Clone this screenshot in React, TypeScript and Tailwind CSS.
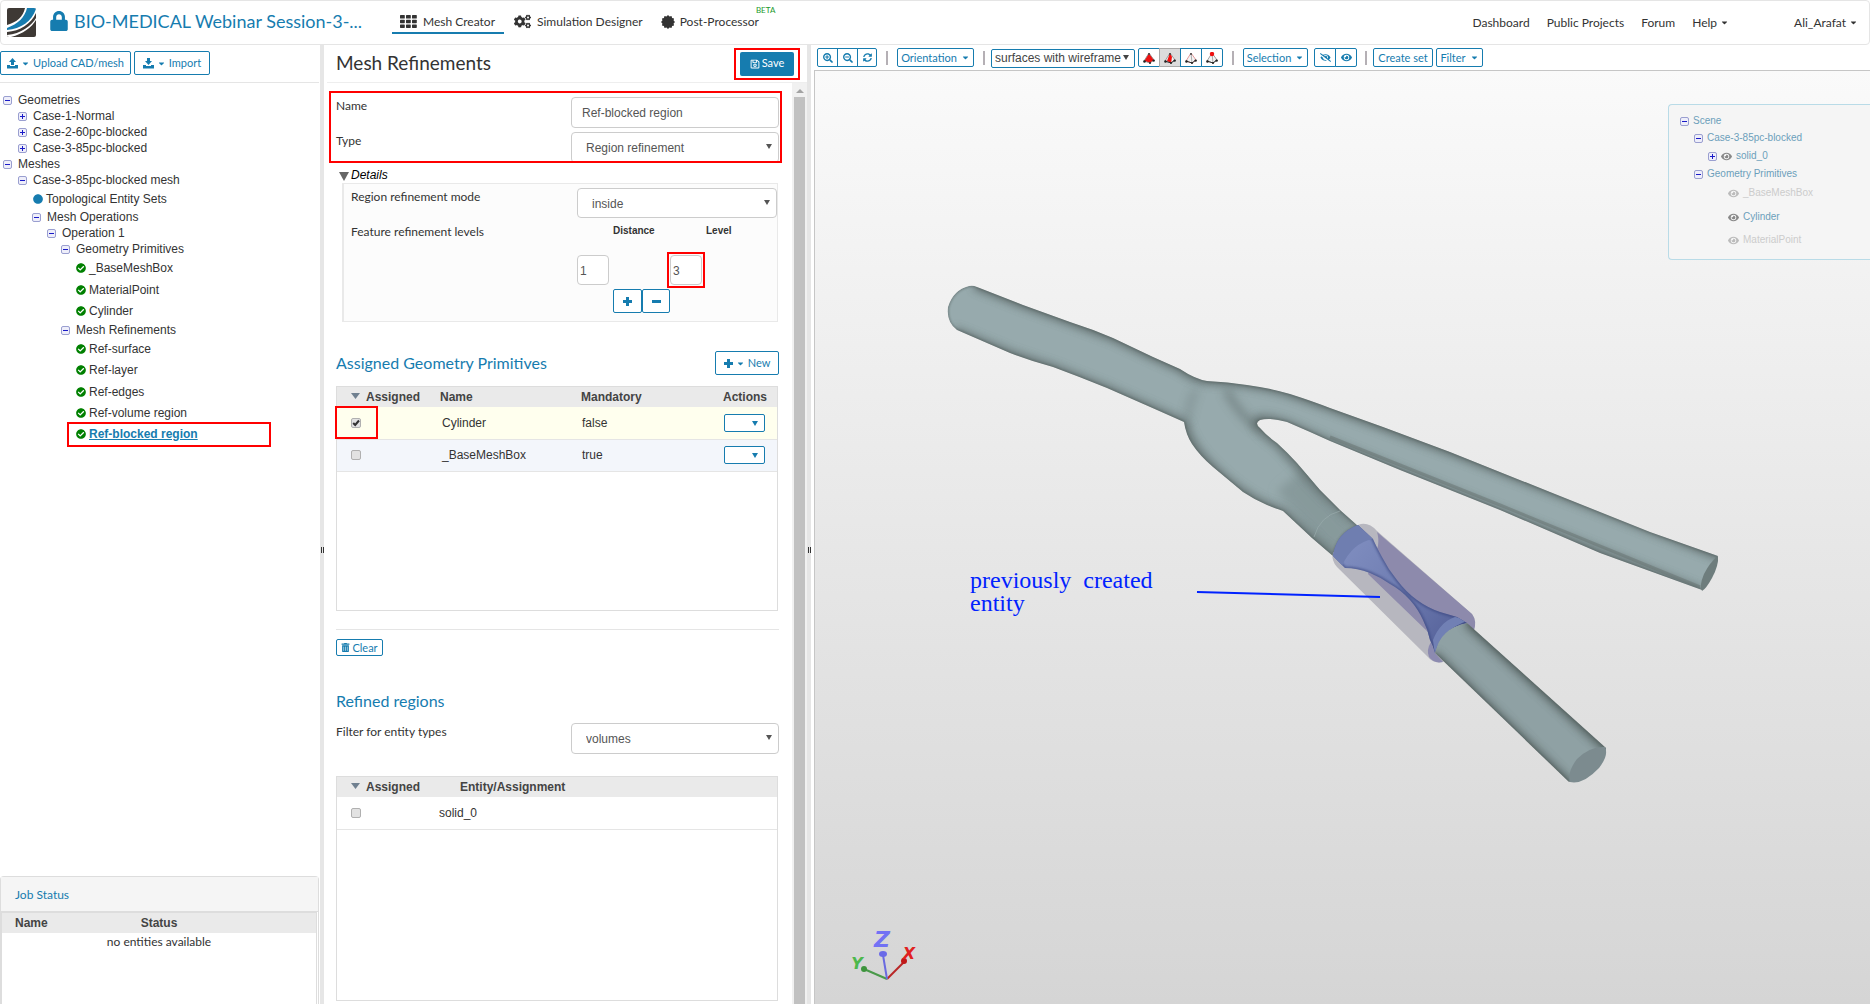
import React from 'react';
import { FaCaretDown, FaCheckCircle, FaCircle, FaCogs, FaEye, FaEyeSlash, FaLock, FaRegSave, FaSearchMinus, FaSearchPlus, FaSyncAlt, FaTrashAlt } from 'react-icons/fa';

const LATO = "font-['Lato','Liberation_Sans',sans-serif]";
const ARIAL = "font-['Liberation_Sans',Arial,sans-serif]";

interface TreeItem {
    label: string;
    kind: 'open' | 'closed' | 'set' | 'done';
    indent: string;
    height: string;
    active?: boolean;
}

const TREE: TreeItem[] = [
    { label: 'Geometries', kind: 'open', indent: 'pl-[3px]', height: 'h-4' },
    { label: 'Case-1-Normal', kind: 'closed', indent: 'pl-[18px]', height: 'h-4' },
    { label: 'Case-2-60pc-blocked', kind: 'closed', indent: 'pl-[18px]', height: 'h-4' },
    { label: 'Case-3-85pc-blocked', kind: 'closed', indent: 'pl-[18px]', height: 'h-4' },
    { label: 'Meshes', kind: 'open', indent: 'pl-[3px]', height: 'h-4' },
    { label: 'Case-3-85pc-blocked mesh', kind: 'open', indent: 'pl-[18px]', height: 'h-4' },
    { label: 'Topological Entity Sets', kind: 'set', indent: 'pl-[33px]', height: 'h-[21px]' },
    { label: 'Mesh Operations', kind: 'open', indent: 'pl-[32px]', height: 'h-4' },
    { label: 'Operation 1', kind: 'open', indent: 'pl-[47px]', height: 'h-4' },
    { label: 'Geometry Primitives', kind: 'open', indent: 'pl-[61px]', height: 'h-4' },
    { label: '_BaseMeshBox', kind: 'done', indent: 'pl-[76px]', height: 'h-[22px]' },
    { label: 'MaterialPoint', kind: 'done', indent: 'pl-[76px]', height: 'h-[21px]' },
    { label: 'Cylinder', kind: 'done', indent: 'pl-[76px]', height: 'h-[22px]' },
    { label: 'Mesh Refinements', kind: 'open', indent: 'pl-[61px]', height: 'h-4' },
    { label: 'Ref-surface', kind: 'done', indent: 'pl-[76px]', height: 'h-[21px]' },
    { label: 'Ref-layer', kind: 'done', indent: 'pl-[76px]', height: 'h-[22px]' },
    { label: 'Ref-edges', kind: 'done', indent: 'pl-[76px]', height: 'h-[21px]' },
    { label: 'Ref-volume region', kind: 'done', indent: 'pl-[76px]', height: 'h-[21px]' },
    { label: 'Ref-blocked region', kind: 'done', indent: 'pl-[76px]', height: 'h-[22px]', active: true },
];

const Toggle: React.FC<{ open: boolean }> = ({ open }) => (
    <svg viewBox="0 0 9 9" className="w-[9px] h-[9px] shrink-0">
        <rect x="0.5" y="0.5" width="8" height="8" rx="1.5" fill="#eeeefa" stroke="#9a9fd0" />
        <path d={open ? 'M2 4.5H7' : 'M2 4.5H7M4.5 2V7'} stroke="#1a1ac8" strokeWidth="1" />
    </svg>
);

const RedBox: React.FC<{ className: string }> = ({ className }) => (
    <span className={`absolute border-2 border-[#f00] pointer-events-none z-10 ${className}`} />
);

const TrayIcon: React.FC<{ up?: boolean }> = ({ up }) => (
    <svg viewBox="0 0 11 11" className="w-[11px] h-[11px] shrink-0" fill="currentColor">
        <path d={up ? 'M5.5 0L9 4H7V7H4V4H2Z' : 'M4 0H7V3H9L5.5 7L2 3H4Z'} />
        <path d="M0 7H3V8H8V7H11V10.5H0Z" />
    </svg>
);

const PlusIcon = () => (
    <svg viewBox="0 0 9 9" className="w-[9px] h-[9px] shrink-0" fill="currentColor"><path d="M3 0H6V3H9V6H6V9H3V6H0V3H3Z" /></svg>
);

const MinusIcon = () => (
    <svg viewBox="0 0 9 9" className="w-[9px] h-[9px] shrink-0" fill="currentColor"><path d="M0 3H9V6H0Z" /></svg>
);

const StarBurst = () => {
    const points = Array.from({ length: 24 }, (_, i) => {
        const r = i % 2 ? 5.8 : 7;
        const a = (i * Math.PI) / 12;
        return `${7 + r * Math.cos(a)},${7 + r * Math.sin(a)}`;
    }).join(' ');
    return (
        <svg viewBox="0 0 14 14" className="w-[14px] h-[14px]" fill="currentColor">
            <polygon points={points} />
        </svg>
    );
};

const GridIcon = () => (
    <svg viewBox="0 0 17 13" className="w-[17px] h-[13px]" fill="currentColor">
        {[0, 6, 12].map((x) => [0, 4.7, 9.4].map((y) => <rect key={`${x}-${y}`} x={x} y={y} width="4.8" height="3.5" rx="0.6" />))}
    </svg>
);

const Logo = () => (
    <svg viewBox="0 0 29 29" className="w-[29px] h-[29px] shrink-0">
        <defs>
            <clipPath id="logo-clip"><rect width="29" height="29" rx="2" /></clipPath>
        </defs>
        <g clipPath="url(#logo-clip)">
            <rect width="29" height="29" fill="#3e3935" />
            <path d="M0 17C10 14 16 9 18 0H29V5C24 16 13 23 0 24Z" fill="#fff" />
            <path d="M0 20C11 16 18 9 20 0H29V1C25 13 14 21 0 22Z" fill="#167caf" />
            <path d="M0 27C14 26 25 17 29 10V12C25 19 16 26 4 29H0Z" fill="#fff" />
        </g>
    </svg>
);

// Tetrahedron glyphs for the surface / edge / vertex pick modes
const Tetra: React.FC<{ mode: 'volume' | 'face' | 'edge' | 'node' }> = ({ mode }) => (
    <svg viewBox="0 0 12 12" className="w-3 h-3">
        <path d="M6 1L1 9L7 11L11 8Z" fill={mode === 'volume' ? '#f01010' : '#f4f4f4'} stroke={mode === 'edge' ? '#e08080' : '#888'} strokeWidth="0.8" />
        {mode !== 'volume' && <path d="M6 1L7 11" stroke="#999" strokeWidth="0.8" />}
        {mode === 'face' && <path d="M6 1L3 9L7 11L8 5Z" fill="#f01010" />}
        {mode !== 'volume' && <path d="M1 9L7 11L11 8" stroke="#333" strokeWidth="1" fill="none" />}
        <circle cx="1.5" cy="9.5" r="1.3" fill="#222" />
        <circle cx="7" cy="11" r="1" fill="#222" />
        <circle cx="10.7" cy="8.6" r="1.2" fill="#222" />
        <circle cx="6" cy="2" r={mode === 'node' ? 2.2 : 1} fill={mode === 'node' ? '#f01010' : '#444'} />
    </svg>
);

const Check: React.FC<{ label: string; checked?: boolean }> = ({ label, checked }) => (
    <span className="relative block w-[10px] h-[10px]">
        <input type="checkbox" aria-label={label} defaultChecked={checked} className="peer appearance-none block w-[10px] h-[10px] border border-[#b0b0b0] rounded-[2px] bg-[#e2e2e2]" />
        <svg viewBox="0 0 10 10" className="absolute inset-0 w-[10px] h-[10px] hidden peer-checked:block pointer-events-none">
            <path d="M2.2 5L4.2 7L8 2.5" fill="none" stroke="#333" strokeWidth="2" />
        </svg>
    </span>
);

const Arrow: React.FC<{ className: string }> = ({ className }) => (
    <svg viewBox="0 0 6 5" className={`absolute w-[6px] h-[5px] pointer-events-none ${className}`} fill="currentColor">
        <path d="M0 0H6L3 5Z" />
    </svg>
);

const SelectBox: React.FC<{ id: string; value: string; className: string }> = ({ id, value, className }) => (
    <span className={`relative block text-[#555] shrink-0 ${className}`}>
        <select id={id} className={`appearance-none w-full h-full border border-[#ccc] rounded bg-white pl-[14px] pt-px text-xs ${ARIAL}`}>
            <option>{value}</option>
        </select>
        <Arrow className="right-[7px] top-3" />
    </span>
);

const TOOL = 'border border-[#167caf] rounded-[2px] bg-white text-[#167caf] flex items-center justify-center text-[11px] leading-4 whitespace-nowrap';
const GROUPED = 'border border-[#167caf] bg-white text-[#167caf] flex items-center justify-center h-full -ml-px';

const Separator = () => <span className="w-[2px] h-[14px] bg-[#b5b0b5]" />;

const Header = () => (
    <header className="h-[45px] shrink-0 border border-[#e5e5e5] rounded flex items-center pl-[6px] pr-[11px] text-[#333]">
        <Logo />
        <FaLock className="text-[#167caf] ml-[14px] mb-1 w-[18px] h-5" />
        <a href="#project" className="ml-[6px] text-lg leading-6 text-[#167caf] w-[318px] pb-1 whitespace-nowrap">BIO-MEDICAL Webinar Session-3-...</a>
        <nav className="flex text-xs leading-4 h-[22px]">
            <a href="#mesh" className="flex items-center gap-[6px] pl-2 pr-[9px] border-b-2 border-[#167caf]"><GridIcon />Mesh Creator</a>
            <a href="#simulation" className="flex items-center gap-[6px] ml-[10px] pb-[2px]"><FaCogs size={17} />Simulation Designer</a>
            <a href="#post" className="relative flex items-center gap-[5px] ml-[18px] pb-[2px]">
                <StarBurst />Post-Processor
                <span className="absolute left-full -ml-[3px] -top-[7px] text-[8px] leading-[10px] text-[#1d9a2c]">BETA</span>
            </a>
        </nav>
        <nav className="ml-auto flex items-center gap-[17px] text-xs leading-4">
            <a href="#dashboard">Dashboard</a>
            <a href="#projects">Public Projects</a>
            <a href="#forum">Forum</a>
            <a href="#help" className="flex items-center gap-[3px]">Help <FaCaretDown size={9} /></a>
            <a href="#user" className="flex items-center gap-[3px] ml-12">Ali_Arafat <FaCaretDown size={9} /></a>
        </nav>
    </header>
);

const TreeRow: React.FC<{ item: TreeItem }> = ({ item }) => (
    <li className={`relative flex items-center ${item.indent} ${item.height}`}>
        {item.kind === 'open' && <Toggle open />}
        {item.kind === 'closed' && <Toggle open={false} />}
        {item.kind === 'set' && <FaCircle size={10} className="text-[#167caf]" />}
        {item.kind === 'done' && <FaCheckCircle size={10} className="text-[#008000]" />}
        {item.active ? (
            <a href="#active" className="font-bold underline text-[#167caf] ml-[3px]">{item.label}</a>
        ) : (
            <span className={item.kind === 'open' || item.kind === 'closed' ? 'ml-[6px]' : 'ml-[3px]'}>{item.label}</span>
        )}
        {item.active && <RedBox className="left-[67px] right-[49px] -top-px h-[25px]" />}
    </li>
);

const LeftPanel = () => (
    <aside className="w-80 shrink-0 flex flex-col">
        <div className="flex gap-[3px] pt-[6px] pb-[7px] border-b border-[#e5e5e5] mr-px">
            <button className={`${TOOL} h-6 w-[131px] gap-[3px]`}><TrayIcon up /><FaCaretDown size={9} />Upload CAD/mesh</button>
            <button className={`${TOOL} h-6 w-[76px] gap-[3px]`}><TrayIcon /><FaCaretDown size={9} />Import</button>
        </div>
        <ul className={`flex-1 pt-[9px] text-xs leading-4 text-[#333] ${ARIAL}`}>
            {TREE.map((item) => <TreeRow key={item.label} item={item} />)}
        </ul>
        <section className="h-32 shrink-0 border border-b-0 border-[#ddd] rounded-t mr-px">
            <h2 className="h-[35px] bg-[#f5f5f5] border-b border-[#ddd] pl-[14px] pt-[2px] flex items-center text-xs text-[#167caf]">Job Status</h2>
            <div className="h-[92px] border border-b-0 border-[#ddd] mr-px">
                <table className="w-full table-fixed text-xs leading-4 text-[#333]">
                    <thead className={`bg-[#eaeaea] text-[#444] ${ARIAL}`}>
                        <tr className="h-5">
                            <th className="w-[90px] text-left pl-[13px]">Name</th>
                            <th>Status</th>
                            <th className="w-[90px]" />
                        </tr>
                    </thead>
                    <tbody>
                        <tr className="h-[18px]"><td colSpan={3} className="text-center">no entities available</td></tr>
                    </tbody>
                </table>
            </div>
        </section>
    </aside>
);

const Splitter = () => (
    <div className="w-1 shrink-0 bg-[#e6e6e6] flex items-center justify-end">
        <span className="w-[3px] h-[6px] border-x border-[#333] bg-[#e6e6e6] mb-[-50px]" />
    </div>
);

const SortHead: React.FC = () => (
    <span className="flex items-center gap-[6px] pl-[14px]">
        <svg viewBox="0 0 9 6" className="w-[9px] h-[6px] mb-[2px]" fill="#708090"><path d="M0 0H9L4.5 6Z" /></svg>
        Assigned
    </span>
);

const PRIMITIVES = [
    { name: 'Cylinder', mandatory: 'false', checked: true, row: 'bg-[#ffffee]' },
    { name: '_BaseMeshBox', mandatory: 'true', checked: false, row: 'bg-[#f3f6fb]' },
];

const FormPanel = () => (
    <main className="w-[483px] shrink-0 flex flex-col text-[#333]">
        <div className="h-[38px] shrink-0 border-b border-[#eee] flex items-center justify-between pl-[9px] pr-[13px] ml-[3px]">
            <h1 className="text-[19px] leading-6 pb-[2px]">Mesh Refinements</h1>
            <span className="relative">
                <button className="bg-[#167caf] text-white rounded-[2px] w-[54px] h-6 flex items-center justify-center gap-[2px] text-[11px]"><FaRegSave size={10} />Save</button>
                <RedBox className="-inset-x-[6px] -top-1 -bottom-1" />
            </span>
        </div>
        <div className="flex-1 min-h-0 flex">
            <form className="flex-1 pl-3 pr-[13px] pt-[14px] text-xs leading-4 overflow-hidden">
                <div className="relative">
                    <div className="flex justify-between">
                        <label htmlFor="name" className="pt-px">Name</label>
                        <input id="name" defaultValue="Ref-blocked region" className={`w-[208px] h-[31px] border border-[#ccc] rounded px-[10px] pt-px text-[#555] ${ARIAL}`} />
                    </div>
                    <div className="flex justify-between mt-1">
                        <label htmlFor="type" className="pt-px">Type</label>
                        <SelectBox id="type" value="Region refinement" className="w-[208px] h-[31px]" />
                    </div>
                    <RedBox className="-left-[7px] -right-[3px] -top-[6px] bottom-0" />
                </div>

                <div className={`flex items-center gap-[2px] pl-[3px] mt-1 italic text-black ${ARIAL}`}>
                    <svg viewBox="0 0 10 9" className="w-[10px] h-[9px] mt-[2px]" fill="#666"><path d="M0 0H10L5 9Z" /></svg>
                    Details
                </div>
                <fieldset className="ml-[6px] mr-px h-[139px] border border-l-2 border-[#e9e9e9] bg-[#fcfcfc] pl-[7px] pt-1">
                    <div className="flex justify-between">
                        <label htmlFor="mode" className="pt-px">Region refinement mode</label>
                        <SelectBox id="mode" value="inside" className="w-[200px] h-[30px]" />
                    </div>
                    <div className="flex justify-between mt-[5px]">
                        <span className="pt-px">Feature refinement levels</span>
                        <div className={`w-[200px] ${ARIAL}`}>
                            <div className="flex text-[10px] font-bold pl-9">
                                <label htmlFor="distance" className="w-[93px]">Distance</label>
                                <label htmlFor="level">Level</label>
                            </div>
                            <div className="flex gap-[61px] mt-4">
                                <input id="distance" defaultValue="1" className="w-8 h-[30px] border border-[#ccc] rounded bg-white px-[2px] pt-px text-[#555]" />
                                <span className="relative">
                                    <input id="level" defaultValue="3" className="w-8 h-[30px] border border-[#ccc] rounded bg-white px-[2px] pt-px text-[#555]" />
                                    <RedBox className="-inset-[3px]" />
                                </span>
                            </div>
                            <div className="flex pl-9 mt-1">
                                <button type="button" aria-label="Add level" className={`${TOOL} w-[29px] h-6`}><PlusIcon /></button>
                                <button type="button" aria-label="Remove level" className={`${TOOL} w-7 h-6`}><MinusIcon /></button>
                            </div>
                        </div>
                    </div>
                </fieldset>

                <div className="flex items-center justify-between mt-[29px]">
                    <h2 className="text-base leading-6 text-[#167caf]">Assigned Geometry Primitives</h2>
                    <button type="button" className={`${TOOL} w-16 h-6 gap-[3px]`}><PlusIcon /><FaCaretDown size={9} />New</button>
                </div>
                <div className={`mt-[11px] mr-px h-[225px] border border-[#ddd] relative ${ARIAL}`}>
                    <table className="w-full table-fixed">
                        <thead className="bg-[#eaeaea] text-[#444] text-left">
                            <tr className="h-5">
                                <th className="w-[103px]"><SortHead /></th>
                                <th className="w-[141px]">Name</th>
                                <th>Mandatory</th>
                                <th className="w-[54px]">Actions</th>
                            </tr>
                        </thead>
                        <tbody>
                            {PRIMITIVES.map((p) => (
                                <tr key={p.name} className={`h-8 border-b border-[#e5e5e5] ${p.row}`}>
                                    <td className="pl-[14px] relative">
                                        <Check label={`Assign ${p.name}`} checked={p.checked} />
                                        {p.checked && <RedBox className="-left-[2px] -top-px w-[43px] h-[33px]" />}
                                    </td>
                                    <td className="pl-[2px]">{p.name}</td>
                                    <td className="pl-px">{p.mandatory}</td>
                                    <td className="pl-px">
                                        <span className="relative block w-[41px] h-[18px] text-[#167caf]">
                                            <select aria-label={`Actions for ${p.name}`} className="appearance-none block w-full h-full border border-[#167caf] rounded-[2px] bg-white"><option /></select>
                                            <Arrow className="right-[7px] top-[7px]" />
                                        </span>
                                    </td>
                                </tr>
                            ))}
                        </tbody>
                    </table>
                </div>
                <hr className="mt-[18px] border-[#e5e5e5]" />
                <button type="button" className={`${TOOL} w-[47px] h-[17px] mt-[9px] gap-[2px]`}><FaTrashAlt size={9} />Clear</button>

                <h2 className="text-base leading-6 text-[#167caf] mt-[33px]">Refined regions</h2>
                <div className="flex justify-between mt-[10px]">
                    <label htmlFor="entity" className="pt-px">Filter for entity types</label>
                    <SelectBox id="entity" value="volumes" className="w-[208px] h-[31px]" />
                </div>
                <div className={`mt-[22px] mr-px h-[225px] border border-[#ddd] ${ARIAL}`}>
                    <table className="w-full table-fixed">
                        <thead className="bg-[#eaeaea] text-[#444] text-left">
                            <tr className="h-5">
                                <th className="w-[102px]"><SortHead /></th>
                                <th className="pl-[21px]">Entity/Assignment</th>
                            </tr>
                        </thead>
                        <tbody>
                            <tr className="h-8 border-b border-[#e5e5e5]">
                                <td className="pl-[14px]"><Check label="Assign solid_0" /></td>
                                <td>solid_0</td>
                            </tr>
                        </tbody>
                    </table>
                </div>
            </form>
            <div className="w-[15px] shrink-0 bg-[#f1f1f1] flex flex-col items-center">
                <svg viewBox="0 0 8 4" className="w-2 h-1 mt-[6px] mb-1 shrink-0" fill="#a3a3a3"><path d="M0 4H8L4 0Z" /></svg>
                <span className="flex-1 w-[11px] bg-[#c1c1c1]" />
            </div>
        </div>
    </main>
);

const Toolbar = () => (
    <div className="h-[25px] shrink-0 flex items-center pl-[6px]">
        <div className="flex h-[19px] pl-px">
            <button aria-label="Zoom in" className={`${GROUPED} w-[21px] rounded-l-[2px]`}><FaSearchPlus size={10} /></button>
            <button aria-label="Zoom out" className={`${GROUPED} w-[21px]`}><FaSearchMinus size={10} /></button>
            <button aria-label="Reset view" className={`${GROUPED} w-5 rounded-r-[2px]`}><FaSyncAlt size={9} /></button>
        </div>
        <div className="flex items-center mx-[9px] gap-[9px]">
            <Separator />
            <button className={`${TOOL} h-[19px] w-[77px] gap-1`}>Orientation <FaCaretDown size={9} /></button>
            <Separator />
        </div>
        <span className={`relative block w-[144px] h-[19px] mt-px text-[#444] -ml-[3px] ${ARIAL}`}>
            <select aria-label="Render mode" className="appearance-none block w-full h-full border border-[#167caf] rounded-[2px] bg-white pl-[3px] text-xs"><option>surfaces with wireframe</option></select>
            <Arrow className="right-[6px] top-[6px]" />
        </span>
        <div className="flex h-[19px] ml-1">
            <button aria-label="Pick volumes" className={`${GROUPED} w-[22px] rounded-l-[2px]`}><Tetra mode="volume" /></button>
            <button aria-label="Pick faces" className="border border-[#aaa] bg-[#dcdcdc] flex items-center justify-center h-full -ml-px w-[22px]"><Tetra mode="face" /></button>
            <button aria-label="Pick edges" className={`${GROUPED} w-[22px]`}><Tetra mode="edge" /></button>
            <button aria-label="Pick nodes" className={`${GROUPED} w-[22px] rounded-r-[2px]`}><Tetra mode="node" /></button>
        </div>
        <div className="flex items-center ml-[9px] gap-[9px]">
            <Separator />
            <button className={`${TOOL} h-[19px] w-[65px] gap-1`}>Selection <FaCaretDown size={9} /></button>
        </div>
        <div className="flex h-[19px] ml-[7px]">
            <button aria-label="Hide selection" className={`${GROUPED} w-[22px] rounded-l-[2px]`}><FaEyeSlash size={11} /></button>
            <button aria-label="Show all" className={`${GROUPED} w-[22px] rounded-r-[2px]`}><FaEye size={11} /></button>
        </div>
        <div className="flex items-center ml-2">
            <Separator />
            <button className={`${TOOL} h-[19px] w-[60px] ml-[6px]`}>Create set</button>
            <button className={`${TOOL} h-[19px] w-[47px] ml-[3px] gap-1`}>Filter <FaCaretDown size={9} /></button>
        </div>
    </div>
);

const SCENE = [
    { label: 'Scene', indent: 'pl-[11px]', height: 'h-4', toggle: true, open: true },
    { label: 'Case-3-85pc-blocked', indent: 'pl-[25px]', height: 'h-[18px]', toggle: true, open: true },
    { label: 'solid_0', indent: 'pl-[39px]', height: 'h-[18px]', toggle: true, open: false, eye: true },
    { label: 'Geometry Primitives', indent: 'pl-[25px]', height: 'h-[18px]', toggle: true, open: true },
    { label: '_BaseMeshBox', indent: 'pl-[59px]', height: 'h-5', eye: true, dim: true },
    { label: 'Cylinder', indent: 'pl-[59px]', height: 'h-7', eye: true },
    { label: 'MaterialPoint', indent: 'pl-[59px]', height: 'h-[18px]', eye: true, dim: true },
];

const ScenePanel = () => (
    <div className={`absolute right-0 top-[33px] w-[202px] h-[156px] border border-r-0 border-[#b9dbe7] rounded-l bg-[#f5f5f5] pt-2 text-[10px] leading-4 text-[#6c9fbb] ${ARIAL}`}>
        <ul>
            {SCENE.map((s) => (
                <li key={s.label} className={`flex items-center gap-1 ${s.indent} ${s.height} ${s.dim ? 'text-[#ccc]' : ''}`}>
                    {s.toggle && <Toggle open={s.open} />}
                    {s.eye && <FaEye size={11} className={s.dim ? 'text-[#bbb]' : 'text-[#888]'} />}
                    <span>{s.label}</span>
                </li>
            ))}
        </ul>
    </div>
);

const VESSEL = 'M969 286Q973 285 977 287L1023 305L1070 322Q1092 329 1113 338L1153 357L1180 369Q1195 379 1207 381Q1228 382 1247 385Q1270 388 1290 394Q1312 401 1330 408L1383 427L1450 452L1550 492L1650 532L1718 556L1702 590L1600 553L1500 510L1400 470L1330 441L1310 432L1287 422Q1270 417 1260 420Q1254 423 1260 428Q1268 437 1277 443Q1288 453 1297 463L1320 490L1340 510L1358 526Q1338 533 1333 556L1312 538L1283 511Q1275 508 1267 505Q1255 500 1243 492L1213 467Q1200 456 1192 444Q1186 435 1184 422L1157 410L1107 388Q1080 377 1053 367Q1030 361 1010 353L957 330Q946 322 948 307Q953 290 969 286Z';
const BLOCKAGE = 'M1358 525L1373 539Q1376 546 1382 557Q1388 569 1397 580Q1406 592 1417 600Q1428 608 1440 612L1457 617L1467 623Q1442 628 1435 653Q1433 646 1430 640Q1428 630 1423 620Q1418 609 1410 600Q1401 590 1390 584Q1380 577 1370 573Q1357 568 1345 568L1333 556Q1336 533 1358 525Z';
const OUTLET = 'M1467 623L1606 748Q1606 770 1569 782L1435 653Q1440 628 1467 623Z';

const VesselScene = () => (
    <svg viewBox="815 71 1055 933" className="absolute inset-0 w-full h-full" preserveAspectRatio="xMinYMin slice">
        <defs>
            <filter id="soft" x="-10%" y="-10%" width="120%" height="120%"><feGaussianBlur stdDeviation="4" /></filter>
            {/* wide region so that blurred short strokes are not cut into boxes */}
            <filter id="haze" filterUnits="userSpaceOnUse" x="1150" y="360" width="240" height="220"><feGaussianBlur stdDeviation="5" /></filter>
            <filter id="edge" x="-10%" y="-10%" width="120%" height="120%"><feGaussianBlur stdDeviation="1" /></filter>
            <clipPath id="vessel-clip"><path d={VESSEL} /></clipPath>
            <clipPath id="block-clip"><path d={BLOCKAGE} /></clipPath>
            <clipPath id="outlet-clip"><path d={OUTLET} /></clipPath>
            <linearGradient id="block-fill" gradientUnits="userSpaceOnUse" x1="1345" y1="545" x2="1450" y2="640">
                <stop offset="0" stopColor="#7f8dbf" />
                <stop offset="0.5" stopColor="#6f7db2" />
                <stop offset="1" stopColor="#56629a" />
            </linearGradient>
        </defs>

        <g clipPath="url(#vessel-clip)">
            <path d={VESSEL} fill="#97aaad" />
            <path d="M1290 480L1345 545" stroke="#879a9b" strokeWidth="34" fill="none" filter="url(#haze)" />
            <g fill="none" stroke="#55615f">
                <path d="M975 284L1023 303L1070 320L1113 336L1153 355L1180 367Q1195 378 1207 379Q1250 380 1290 392L1330 406L1450 450L1720 555" strokeWidth="10" opacity="0.8" filter="url(#soft)" />
                <path d="M954 332L1010 355L1053 369L1107 390L1184 424Q1188 446 1213 469Q1240 495 1267 507L1283 513L1335 560" strokeWidth="10" opacity="0.7" filter="url(#soft)" />
                <path d="M1702 592L1500 512L1330 443L1287 424Q1256 414 1256 423Q1262 434 1277 443L1320 490L1360 526" strokeWidth="8" opacity="0.7" filter="url(#soft)" />
                <path d="M1226 390Q1238 414 1260 430" strokeWidth="7" opacity="0.5" filter="url(#haze)" />
                <path d="M1196 390Q1188 404 1188 420" strokeWidth="7" opacity="0.25" filter="url(#haze)" />
            </g>
            <path d={VESSEL} fill="none" stroke="#4d5957" strokeWidth="2" opacity="0.55" filter="url(#edge)" />
            <path d="M1700 587L1500 505L1330 437" stroke="#66726f" strokeWidth="3" fill="none" opacity="0.5" />
            <path d="M1314 537Q1320 516 1340 511" stroke="#9aabac" strokeWidth="1" fill="none" opacity="0.7" />
        </g>
        <path d="M1718 556Q1719 565 1712 578Q1706 589 1702 591Q1699 586 1704 574Q1710 562 1718 556Z" fill="#6e7d7d" />

        <path d="M1358 525Q1368 521 1377 531L1472 614Q1477 621 1474 630L1443 662Q1433 664 1428 657L1337 567Q1331 560 1333 553Z" fill="#b7b7bf" />
        <path d="M1377 532L1472 614Q1477 621 1474 630L1467 623L1430 640L1428 632L1368 574L1378 546Q1379 538 1377 532Z" fill="#8d8aac" />
        <path d="M1431 642Q1426 650 1429 657Q1434 664 1443 662L1435 653Z" fill="#8c8ab0" />

        <path d={BLOCKAGE} fill="url(#block-fill)" />
        <g clipPath="url(#block-clip)">
            <path d={BLOCKAGE} fill="none" stroke="#36427c" strokeWidth="3" opacity="0.6" filter="url(#edge)" />
            <path d="M1373 539Q1352 543 1342 566L1330 560L1330 530L1360 520Z" fill="#6f7eb0" />
            <path d="M1470 620Q1440 629 1435 655L1433 640Q1440 622 1455 617Z" fill="#7180b4" />
        </g>

        <g clipPath="url(#outlet-clip)">
            <path d={OUTLET} fill="#8fa1a4" />
            <path d="M1467 621L1610 750M1433 655L1570 786" stroke="#4d5956" strokeWidth="10" opacity="0.85" filter="url(#soft)" />
            <path d="M1467 623L1606 748M1435 653L1569 782" stroke="#4d5957" strokeWidth="2" opacity="0.5" filter="url(#edge)" />
        </g>
        <path d="M1605 747Q1609 755 1599 768Q1583 785 1570 782Q1567 772 1577 759Q1590 746 1605 747Z" fill="#7c8b8f" />

        <path d="M1197 592L1380 597" stroke="#0022ff" strokeWidth="2" />

        <g fill="none" strokeWidth="2">
            <path d="M887 979L904 962" stroke="#b82626" />
            <path d="M887 979L864 969" stroke="#4a9a4a" />
            <path d="M887 979L883 955" stroke="#6a6ae0" />
        </g>
        <circle cx="904" cy="961" r="3" fill="#c01818" />
        <circle cx="864" cy="969" r="3" fill="#3d943d" />
        <ellipse cx="883" cy="954" rx="4" ry="3" fill="#6a6ae8" />
        <g fontFamily="'DejaVu Sans', sans-serif" fontWeight="bold" fontStyle="italic" textAnchor="middle">
            <text x="882" y="947" fontSize="22" fill="#7272f4">Z</text>
            <text x="909" y="959" fontSize="16" fill="#e02020">X</text>
            <text x="857" y="969" fontSize="16" fill="#4cb84c">Y</text>
        </g>
    </svg>
);

const Viewer = () => (
    <section className="flex-1 min-w-0 flex flex-col">
        <Toolbar />
        <div className="relative flex-1 ml-[3px] border-l border-t border-[#c6c6c6] bg-linear-to-b from-[#fafafa] to-[#d5d5d5] overflow-hidden">
            <VesselScene />
            <ScenePanel />
            <p className="absolute left-[155px] top-[498px] text-2xl leading-[23px] text-[#0022ff] font-['Liberation_Serif',serif]">
                previously&nbsp; created<br />entity
            </p>
        </div>
    </section>
);

const App: React.FC = () => {
    return (
        <div className={`h-screen flex flex-col bg-white overflow-hidden ${LATO}`}>
            <Header />
            <div className="flex-1 min-h-0 flex">
                <LeftPanel />
                <Splitter />
                <FormPanel />
                <Splitter />
                <Viewer />
            </div>
        </div>
    );
};

export default App;
